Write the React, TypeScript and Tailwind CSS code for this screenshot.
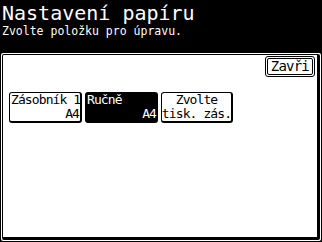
import React from "react";

const mono = { fontFamily: '"DejaVu Sans Mono", monospace' } as React.CSSProperties;

export default function App() {
  return (
    <div className="w-[322px] h-[242px] bg-black flex flex-col overflow-hidden" style={mono}>
      <div className="pl-[2px] pt-[3px] text-[20px] leading-[20px] text-white whitespace-nowrap">Nastavení papíru</div>
      <div className="pl-[2px] mt-[2px] text-[11.5px] leading-[12px] text-white whitespace-nowrap">Zvolte položku pro úpravu.</div>
      <div className="mt-[16px] ml-[1px] w-[320px] h-[188px] bg-white p-px rounded-[2px]">
        <div className="h-full border border-black border-r-[3px] border-b-[3px] rounded-[2px] flex flex-col pt-[1px] pr-[2px]">
          <div className="self-end border border-black rounded-[3px] p-px bg-white">
            <div className="border border-black rounded-[2px] px-[3px] text-[14px] leading-[15px] tracking-[-0.8px] text-black whitespace-nowrap">Zavři</div>
          </div>
          <div className="flex gap-[3px] pl-[6px] mt-[15px]">
            <div className="w-[73px] h-[31px] border border-black border-r-2 border-b-2 rounded-[3px] bg-white text-black text-[13px] leading-[14px] tracking-[-0.9px] flex flex-col pl-px pr-px whitespace-nowrap">
              <span>Zásobník 1</span>
              <span className="self-end">A4</span>
            </div>
            <div className="w-[73px] h-[31px] rounded-[3px] bg-black text-white text-[13px] leading-[14px] tracking-[-0.9px] flex flex-col px-[2px] pt-px whitespace-nowrap">
              <span>Ručně</span>
              <span className="self-end">A4</span>
            </div>
            <div className="w-[72px] h-[31px] border border-black border-r-2 border-b-2 rounded-[3px] bg-white text-black text-[13px] leading-[14px] tracking-[-0.9px] flex flex-col items-center whitespace-nowrap">
              <span>Zvolte</span>
              <span>tisk. zás.</span>
            </div>
          </div>
        </div>
      </div>
    </div>
  );
}
